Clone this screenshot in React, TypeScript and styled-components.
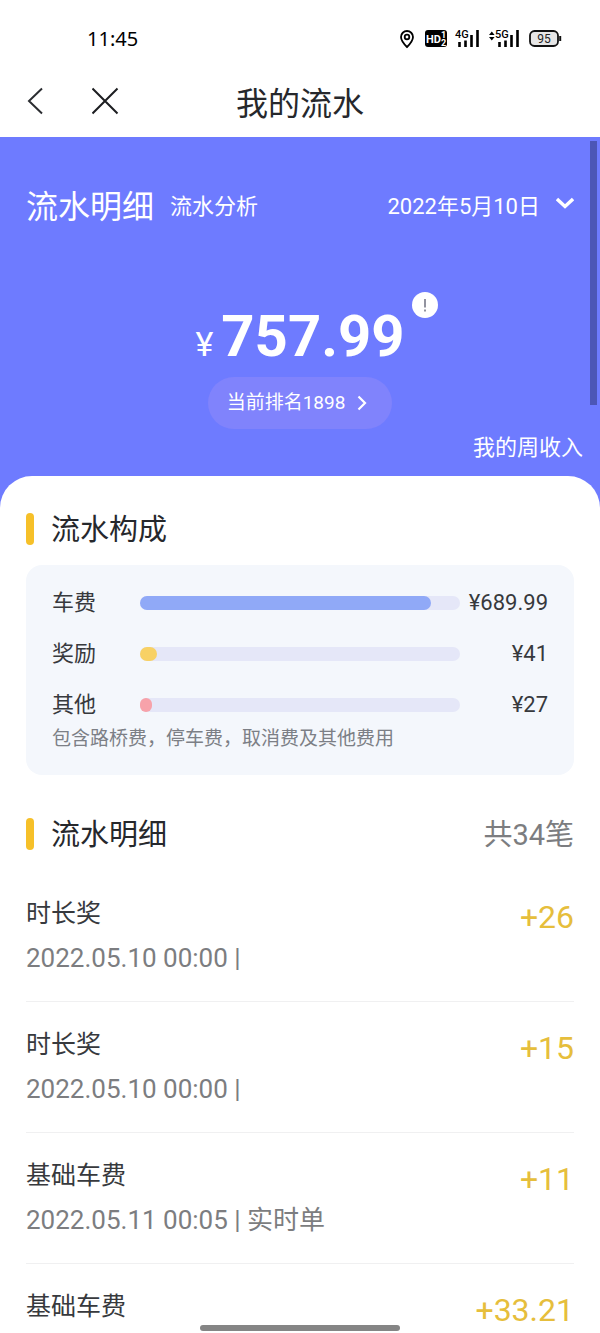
import React from 'react';
import styled, { createGlobalStyle } from 'styled-components';

const GlobalStyle = createGlobalStyle`
  *, *::before, *::after { box-sizing: border-box; }
  body {
    margin: 0;
    background: #ffffff;
    font-family: Roboto, "Noto Sans CJK SC", sans-serif;
    color: #26282c;
  }
  button {
    margin: 0;
    padding: 0;
    border: 0;
    background: none;
    font: inherit;
    color: inherit;
    cursor: pointer;
  }
  h1, h2, h3, p, ul { margin: 0; padding: 0; font-weight: 400; }
  ul { list-style: none; }
  svg { display: block; }
`;

const Screen = styled.div`
  display: flex;
  flex-direction: column;
  height: 100vh;
  overflow: hidden;
`;

const StatusBar = styled.div`
  display: flex;
  flex: none;
  align-items: center;
  justify-content: space-between;
  height: 64px;
  padding: 13px 38px 0 87px;
  color: #000000;
`;

const Clock = styled.span`
  font-family: "Noto Sans", sans-serif;
  font-size: 20px;
  line-height: 28px;
`;

const StatusIcons = styled.div`
  display: flex;
  align-items: center;
  gap: 8px;
`;

const NavBar = styled.header`
  display: grid;
  flex: none;
  grid-template-columns: 1fr auto 1fr;
  align-items: center;
  height: 73px;
  padding: 0 26px;
`;

const NavActions = styled.div`
  display: flex;
  gap: 46px;
`;

const IconButton = styled.button`
  display: block;
`;

const Title = styled.h1`
  padding-top: 6px;
  font-size: 32px;
  line-height: 44px;
`;

const Viewport = styled.div`
  position: relative;
  display: flex;
  flex: 1;
  min-height: 0;
`;

const Scroller = styled.main`
  flex: 1;
  min-width: 0;
  overflow-y: auto;
  scrollbar-width: none;
  background: #6e7bff;
`;

const ScrollThumb = styled.div`
  position: absolute;
  top: 4px;
  right: 3px;
  width: 7px;
  height: 264px;
  background: #4c56b6;
`;

const Hero = styled.section`
  display: flex;
  flex-direction: column;
  padding: 46px 26px 13px;
  color: #ffffff;
`;

const Toolbar = styled.div`
  display: flex;
  align-items: center;
  justify-content: space-between;
  height: 48px;
`;

const Tabs = styled.div`
  display: flex;
  align-items: center;
  gap: 16px;
`;

const Tab = styled.button<{ $active?: boolean }>`
  font-size: ${(p) => (p.$active ? 32 : 22)}px;
  line-height: 48px;
`;

const DateButton = styled.button`
  display: flex;
  align-items: center;
  gap: 16px;
  font-size: 22px;
  line-height: 48px;
`;

const Total = styled.div`
  position: relative;
  display: flex;
  align-items: baseline;
  align-self: center;
  gap: 8px;
  height: 64px;
  margin-top: 73px;
`;

const Currency = styled.span`
  font-size: 34px;
  line-height: 40px;
`;

const TotalValue = styled.strong`
  font-size: 58px;
  font-weight: 700;
  line-height: 64px;
`;

const InfoButton = styled.button`
  position: absolute;
  top: -12px;
  right: -33px;
`;

const RankButton = styled.button`
  display: flex;
  align-items: center;
  align-self: center;
  gap: 12px;
  height: 52px;
  margin-top: 9px;
  padding: 0 25px 0 19px;
  border-radius: 26px;
  background: #8083fc;
  font-size: 19px;
  line-height: 24px;
`;

const WeekLink = styled.a`
  align-self: flex-end;
  margin: 4px -9px 0 0;
  font-size: 22px;
  line-height: 30px;
  color: inherit;
  text-decoration: none;
`;

const Sheet = styled.div`
  min-height: calc(100% - 339px);
  padding: 37px 26px 0;
  border-radius: 32px 32px 0 0;
  background: #ffffff;
`;

const SectionHead = styled.div`
  display: flex;
  align-items: center;
  gap: 17px;
  height: 32px;

  &::before {
    content: "";
    width: 8px;
    height: 32px;
    border-radius: 4px;
    background: #f6c029;
  }
`;

const SectionTitle = styled.h2`
  flex: 1;
  padding-top: 2px;
  font-size: 29px;
  line-height: 32px;
`;

const Count = styled.span`
  padding-top: 2px;
  font-size: 29px;
  line-height: 32px;
  color: #7c7d80;
`;

const Card = styled.section`
  display: flex;
  flex-direction: column;
  gap: 21px;
  margin: 20px 0 43px;
  padding: 23px 26px;
  border-radius: 16px;
  background: #f4f7fc;
`;

const ShareRow = styled.div`
  display: grid;
  grid-template-columns: 88px 1fr 88px;
  align-items: center;
  height: 30px;
  font-size: 22px;
  line-height: 30px;
  color: #37393d;
`;

const Track = styled.div`
  height: 14px;
  border-radius: 7px;
  background: #e5e7f8;
`;

const Fill = styled.div<{ $color: string }>`
  height: 14px;
  border-radius: 7px;
  background: ${(p) => p.$color};
`;

const ShareValue = styled.span`
  text-align: right;
`;

const Note = styled.p`
  margin-top: -14px;
  padding-bottom: 1px;
  font-size: 19px;
  line-height: 24px;
  color: #7c7f86;
`;

const Records = styled.ul`
  margin-top: 21px;
`;

const Record = styled.li`
  display: flex;
  justify-content: space-between;
  padding: 25px 0 25px;
  border-bottom: 1px solid #f0f0f1;
`;

const RecordName = styled.h3`
  font-size: 25px;
  line-height: 36px;
  color: #37393d;
`;

const RecordMeta = styled.p`
  margin-top: 8px;
  font-size: 26px;
  line-height: 36px;
  color: #7c7d80;
`;

const RecordAmount = styled.span`
  font-size: 32px;
  line-height: 42px;
  color: #e6be3c;
`;

const HomeIndicator = styled.div`
  position: fixed;
  bottom: 2px;
  left: 50%;
  width: 200px;
  height: 6px;
  margin-left: -100px;
  border-radius: 3px;
  background: #858585;
`;

const shares = [
  { label: '车费', value: '¥689.99', percent: 91, color: '#90a9f7' },
  { label: '奖励', value: '¥41', percent: 5.4, color: '#f8d165' },
  { label: '其他', value: '¥27', percent: 3.6, color: '#f7a2aa' },
];

const records = [
  { name: '时长奖', meta: '2022.05.10 00:00 |', amount: '+26' },
  { name: '时长奖', meta: '2022.05.10 00:00 |', amount: '+15' },
  { name: '基础车费', meta: '2022.05.11 00:05 | 实时单', amount: '+11' },
  { name: '基础车费', meta: '', amount: '+33.21' },
];

const PinIcon = () => (
  <svg width="18" height="20" viewBox="0 0 18 20" fill="none" stroke="#000" strokeWidth="1.8">
    <path d="M8 18C4.400 14.400 2 11.200 2 8a6 6 0 0 1 12 0c0 3.200-2.400 6.400-6 10Z" />
    <circle cx="8" cy="8" r="2.300" />
  </svg>
);

const HdIcon = () => (
  <svg width="22" height="20" viewBox="0 0 22 20" fontFamily="Roboto" fontWeight="700" fill="#fff">
    <rect y="1" width="22" height="17" rx="3" fill="#000" />
    <text x="1" y="14" fontSize="11">HD</text>
    <text x="16" y="9" fontSize="9">1</text>
    <text x="16" y="17" fontSize="9">2</text>
  </svg>
);

const SignalIcon = ({ label, arrows }: { label: string; arrows?: boolean }) => (
  <svg
    width={arrows ? 32 : 26}
    height="20"
    viewBox={arrows ? '-7 0 32 20' : '-1 0 26 20'}
    fontFamily="Roboto"
    fontWeight="500"
  >
    {arrows && <path d="M-7 6 -4.200 2.500l2.800 3.500ZM-7 8 -4.200 11.500l2.800-3.500Z" />}
    <text x="-1" y="9" fontSize="11">{label}</text>
    <path d="M3.500 18v-5M9.500 18v-6.500M15.500 18V6M21.500 18V1" stroke="#000" strokeWidth="2.600" />
  </svg>
);

const BatteryIcon = () => (
  <svg width="33" height="20" viewBox="0 0 33 20">
    <rect x="1" y="2" width="28" height="15" rx="4.500" fill="#e6e6e6" stroke="#111" strokeWidth="1.800" />
    <path d="M31.200 7v5" stroke="#111" strokeWidth="2" />
    <text x="15" y="14" fontSize="12" fontFamily="Roboto" textAnchor="middle" fill="#222">95</text>
  </svg>
);

export default function App() {
  return (
    <>
      <GlobalStyle />
      <Screen>
        <StatusBar>
          <Clock>11:45</Clock>
          <StatusIcons>
            <PinIcon />
            <HdIcon />
            <SignalIcon label="4G" />
            <SignalIcon label="5G" arrows />
            <BatteryIcon />
          </StatusIcons>
        </StatusBar>

        <NavBar>
          <NavActions>
            <IconButton type="button" aria-label="返回">
              <svg width="20" height="28" viewBox="0 0 20 28" fill="none" stroke="#2b2d31" strokeWidth="2">
                <path d="M16 1.500 3 14l13 12.500" />
              </svg>
            </IconButton>
            <IconButton type="button" aria-label="关闭">
              <svg width="28" height="28" viewBox="0 0 28 28" stroke="#1d1e21" strokeWidth="2">
                <path d="M0.500 1.500 25.500 26.500M25.500 1.500 0.500 26.500" />
              </svg>
            </IconButton>
          </NavActions>
          <Title>我的流水</Title>
        </NavBar>

        <Viewport>
          <Scroller>
            <Hero>
              <Toolbar>
                <Tabs>
                  <Tab type="button" $active>流水明细</Tab>
                  <Tab type="button">流水分析</Tab>
                </Tabs>
                <DateButton type="button">
                  2022年5月10日
                  <svg width="18" height="20" viewBox="0 0 18 20" fill="none" stroke="#fff" strokeWidth="3.400">
                    <path d="M1 2 9 9.500l8-7.500" />
                  </svg>
                </DateButton>
              </Toolbar>

              <Total>
                <Currency>¥</Currency>
                <TotalValue>757.99</TotalValue>
                <InfoButton type="button" aria-label="说明">
                  <svg width="26" height="26" viewBox="0 0 26 26">
                    <circle cx="13" cy="13" r="13" fill="#fff" />
                    <path d="M13 7v8.500M13 17.500v2" stroke="#6f7080" strokeWidth="1.500" />
                  </svg>
                </InfoButton>
              </Total>

              <RankButton type="button">
                当前排名1898
                <svg width="10" height="16" viewBox="0 0 10 16" fill="none" stroke="#fff" strokeWidth="2.200">
                  <path d="M1.500 1.500 8 8l-6.500 6.500" />
                </svg>
              </RankButton>

              <WeekLink href="#week">我的周收入</WeekLink>
            </Hero>

            <Sheet>
              <SectionHead>
                <SectionTitle>流水构成</SectionTitle>
              </SectionHead>
              <Card>
                {shares.map((s) => (
                  <ShareRow key={s.label}>
                    <span>{s.label}</span>
                    <Track>
                      <Fill $color={s.color} style={{ width: `${s.percent}%` }} />
                    </Track>
                    <ShareValue>{s.value}</ShareValue>
                  </ShareRow>
                ))}
                <Note>包含路桥费，停车费，取消费及其他费用</Note>
              </Card>

              <SectionHead>
                <SectionTitle>流水明细</SectionTitle>
                <Count>共34笔</Count>
              </SectionHead>
              <Records>
                {records.map((r, i) => (
                  <Record key={i}>
                    <div>
                      <RecordName>{r.name}</RecordName>
                      {r.meta && <RecordMeta>{r.meta}</RecordMeta>}
                    </div>
                    <RecordAmount>{r.amount}</RecordAmount>
                  </Record>
                ))}
              </Records>
            </Sheet>
          </Scroller>
          <ScrollThumb />
        </Viewport>
      </Screen>
      <HomeIndicator />
    </>
  );
}
